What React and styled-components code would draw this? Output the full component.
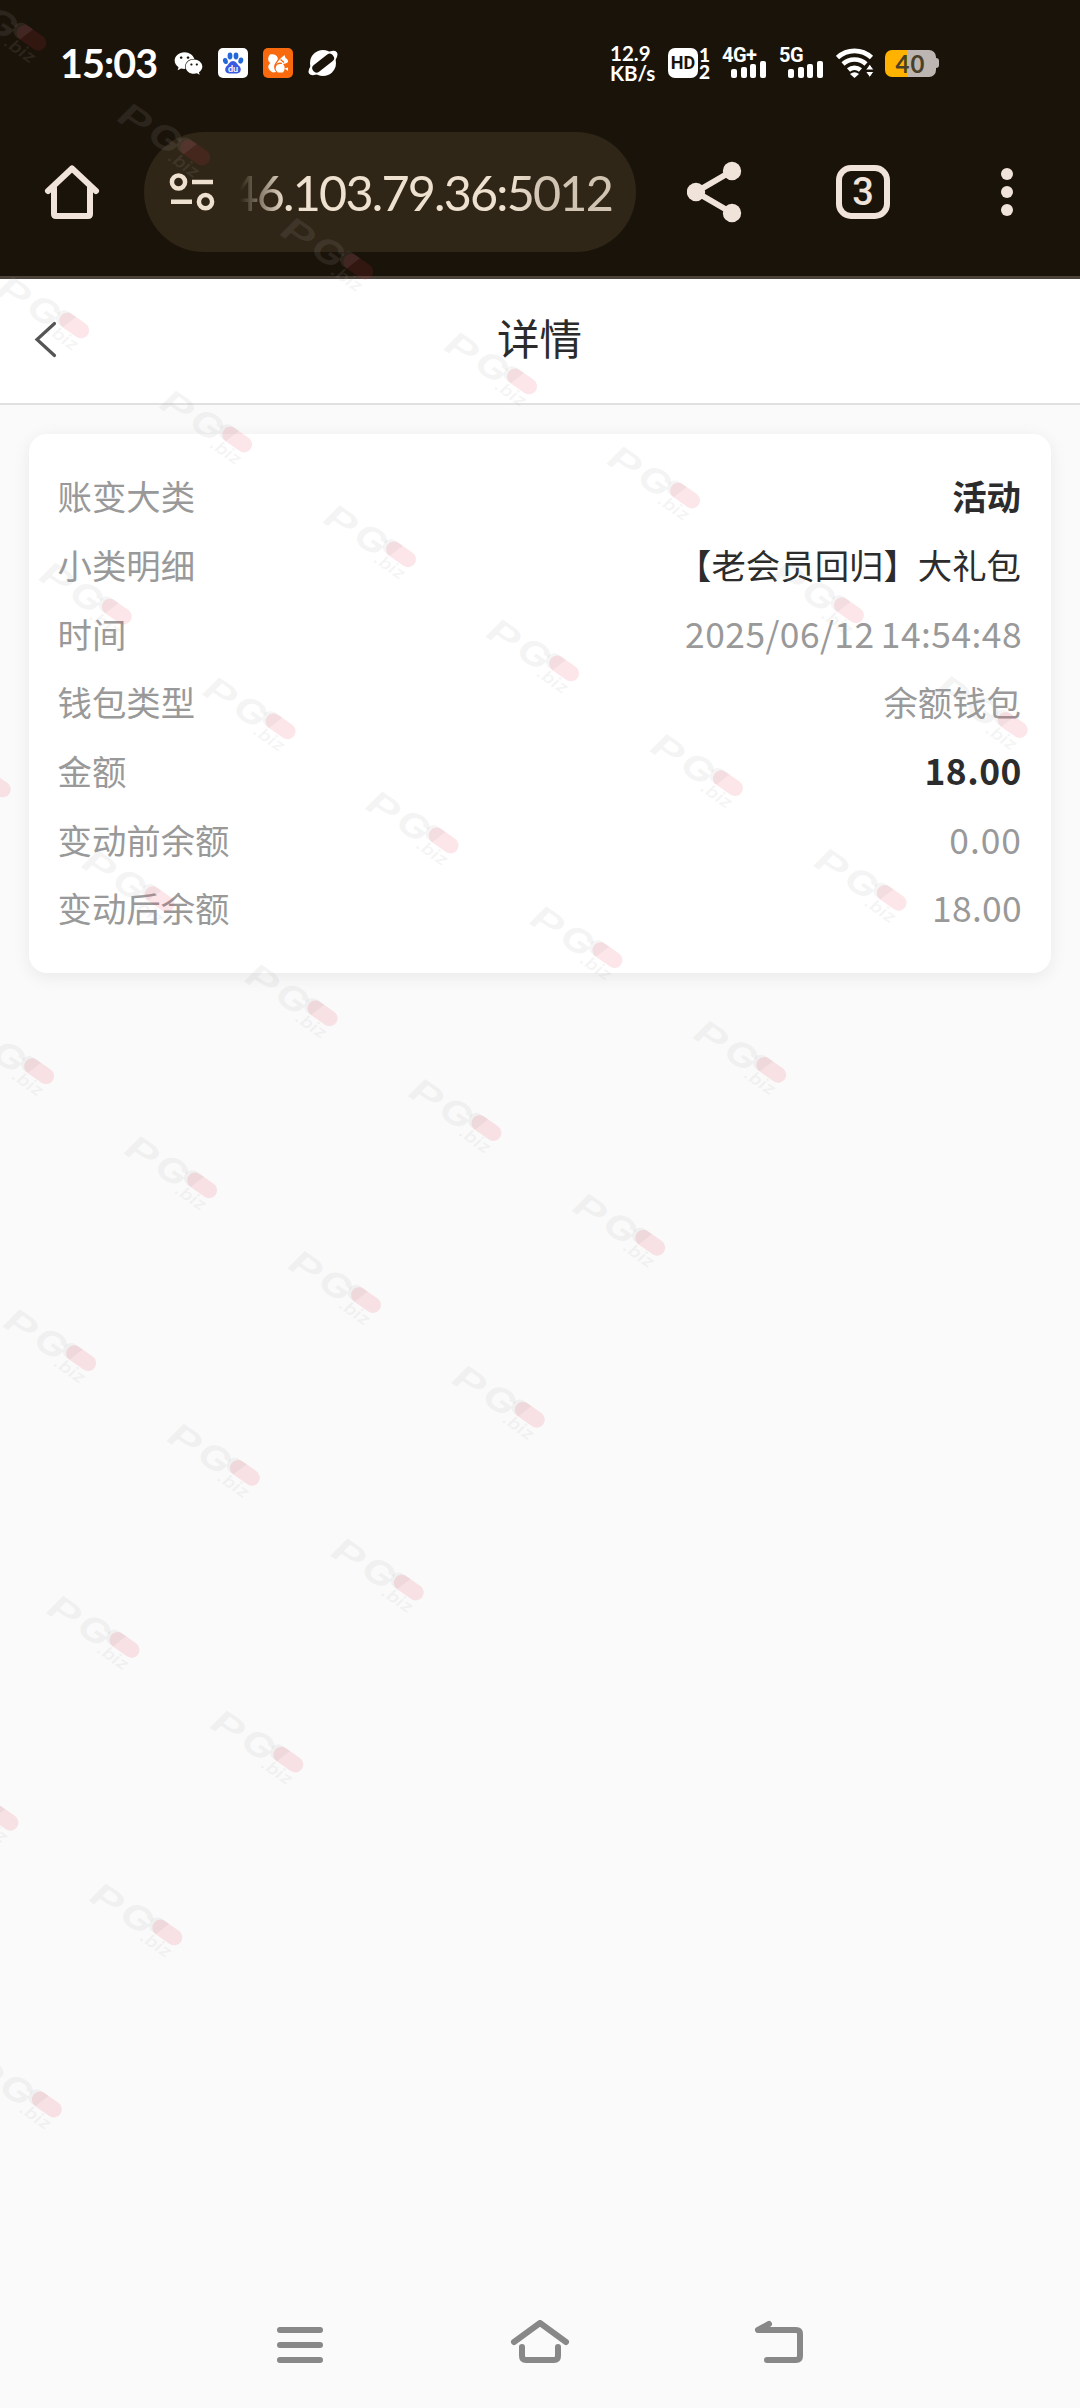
import React from "react";
import styled, { createGlobalStyle } from "styled-components";
import { FaWeixin } from "react-icons/fa";

const GlobalStyle = createGlobalStyle`
    * {
        box-sizing: border-box;
    }
    body {
        margin: 0;
        background: #fafafa;
        font-family: "Noto Sans CJK SC", "Noto Sans", sans-serif;
    }
    svg {
        display: block;
        flex: none;
    }
`;

const Screen = styled.div`
    position: relative;
    display: flex;
    flex-direction: column;
    width: 1080px;
    height: 2408px;
    overflow: hidden;
    background: #fafafa;
`;

const Chrome = styled.div`
    height: 279px;
    background: #1a1309;
    border-bottom: 3px solid #4c433b;
`;

const StatusBar = styled.div`
    display: flex;
    align-items: center;
    height: 110px;
    padding: 16px 141px 0 60px;
    color: #fff;
    font-family: Lato, sans-serif;
`;

const Clock = styled.div`
    width: 114px;
    font-size: 39.5px;
    font-weight: 700;
    line-height: 40px;
    letter-spacing: -0.9px;
`;

const AppIcons = styled.div`
    display: flex;
    align-items: center;
    gap: 15px;
    flex: 1;
`;

const Speed = styled.div`
    width: 58px;
    font-size: 20.5px;
    font-weight: 700;
    line-height: 20px;
    white-space: nowrap;
`;

const HdBadge = styled.div`
    display: flex;
    align-items: center;
    justify-content: center;
    width: 30px;
    height: 30px;
    border-radius: 7px;
    background: #fff;
    color: #1a1309;
    font: 700 18px/30px Roboto, sans-serif;
`;

const SimNumbers = styled.div`
    display: flex;
    flex-direction: column;
    width: 24px;
    padding-left: 1px;
    font: 900 19px/17px Lato, sans-serif;
`;

const Signal = styled.div`
    display: flex;
    flex-direction: column;
    width: ${props => props.$width}px;
    height: 30px;
`;

const SignalLabel = styled.span`
    height: 12px;
    font: 700 20px/14px Roboto, sans-serif;
    letter-spacing: -0.5px;
`;

const SignalBars = styled.div`
    display: flex;
    align-items: flex-end;
    gap: 3.5px;
    height: 18px;
    padding-left: 9px;
`;

const Bar = styled.i`
    width: 6px;
    height: ${props => props.$size}px;
    border-radius: 2px;
    background: #fff;
`;

const Battery = styled.div`
    display: flex;
    align-items: center;
    margin-left: 11px;
`;

const BatteryBody = styled.div`
    width: 51px;
    height: 27px;
    border-radius: 7px;
    background: linear-gradient(90deg, #ffb300 43%, #bcb5b1 43%);
    color: #4a4028;
    font: 700 24px/28px Lato, sans-serif;
    letter-spacing: 1px;
    text-align: center;
`;

const BatteryTip = styled.div`
    width: 3px;
    height: 10px;
    border-radius: 0 3px 3px 0;
    background: #bcb5b1;
`;

const Toolbar = styled.div`
    display: flex;
    align-items: center;
    height: 164px;
    padding-left: 42px;
    color: #f0e3da;
`;

const AddressPill = styled.div`
    display: flex;
    align-items: center;
    width: 492px;
    height: 120px;
    margin: 0 51px 0 42px;
    padding-left: 24px;
    border-radius: 60px;
    background: #302617;
    color: #efe1cf;
`;

const Address = styled.div`
    display: flex;
    justify-content: flex-end;
    width: 372px;
    margin-left: 24px;
    overflow: hidden;
    font: 400 48.5px/64px Lato, sans-serif;
    letter-spacing: -1.8px;
    white-space: nowrap;
    mask-image: linear-gradient(90deg, transparent, #000 45px, #000 270px, rgba(0, 0, 0, 0.85) 300px);
`;

const TabCount = styled.div`
    width: 54px;
    height: 54px;
    margin: 0 87px 0 91px;
    border: 6px solid #f0e3da;
    border-radius: 15px;
    font: 500 38px/43px Roboto, sans-serif;
    text-align: center;
`;

const Header = styled.header`
    display: grid;
    grid-template-columns: 60px 1fr 60px;
    align-items: center;
    height: 126px;
    padding: 0 32px;
    background: #fff;
    border-bottom: 2px solid #e0e0e0;
`;

const Title = styled.h1`
    margin: 0;
    padding: 0 1px 8px 0;
    color: #2b2b2b;
    font-size: 42.5px;
    font-weight: 400;
    line-height: 60px;
    text-align: center;
`;

const Card = styled.section`
    height: 539px;
    margin: 29px 29px 0;
    padding: 27px 30px 27px 28.5px;
    border-radius: 18px;
    background: #fff;
    box-shadow: 0 4px 18px rgba(0, 0, 0, 0.07);
`;

const Row = styled.div`
    display: flex;
    justify-content: space-between;
    align-items: center;
    height: 68.7px;
    font-size: 34.4px;
    line-height: 50px;
`;

const Label = styled.span`
    color: #999;
`;

const Value = styled.span`
    color: ${props => (props.$dark ? "#2c2c2c" : "#999")};
    font-weight: ${props => (props.$bold ? 700 : 400)};
`;

const Digits = styled(Value)`
    margin-right: -1px;
    font-size: 35.4px;
    letter-spacing: ${props => props.$spacing}px;
    word-spacing: -2px;
`;

const NavBar = styled.nav`
    display: flex;
    justify-content: space-between;
    align-items: center;
    height: 126px;
    margin-top: auto;
    padding: 0 275px 0 274px;
    color: #888;
`;

// sits over everything, tilted sheet of 7 x 9 marks
const WatermarkSheet = styled.div`
    position: absolute;
    left: -31px;
    top: -29px;
    display: grid;
    grid-template-columns: repeat(7, 199.6px);
    grid-auto-rows: 210.5px;
    transform: rotate(35deg);
    transform-origin: 0 0;
    pointer-events: none;
`;

const rows = [
    { label: "账变大类", value: "活动", dark: true, bold: true },
    { label: "小类明细", value: "【老会员回归】大礼包", dark: true },
    { label: "时间", value: "2025/06/12 14:54:48", spacing: 0.45 },
    { label: "钱包类型", value: "余额钱包" },
    { label: "金额", value: "18.00", dark: true, bold: true, spacing: 0.5 },
    { label: "变动前余额", value: "0.00", spacing: 1 },
    { label: "变动后余额", value: "18.00", spacing: 0.3 },
];

const Watermark = () => (
    <svg width="120" height="60" viewBox="0 0 120 60" fontFamily="Inter, sans-serif">
        <g fill="#aaa" fillOpacity="0.12">
            <text transform="translate(3 38) skewX(-10)" fontSize="33" fontWeight="600" textLength="33" lengthAdjust="spacingAndGlyphs">P</text>
            <text transform="translate(39 36) skewX(-8)" fontSize="34" fontWeight="700" textLength="32" lengthAdjust="spacingAndGlyphs">G</text>
            <text x="70" y="41" fontSize="17" fontWeight="600" fontStyle="italic" textLength="34" lengthAdjust="spacingAndGlyphs">.biz</text>
            <path d="M77 11h9l-5 16h-4a8 8 0 0 1 0-16z" />
        </g>
        <rect x="73" y="11" width="33" height="16" rx="8" fill="#e6304c" fillOpacity="0.12" />
    </svg>
);

const BaiduIcon = () => (
    <svg width="30" height="30" viewBox="0 0 30 30">
        <rect width="30" height="30" rx="5" fill="#fff" />
        <g fill="#2468d8">
            <ellipse cx="7.4" cy="13" rx="2.4" ry="3.1" transform="rotate(-15 7.4 13)" />
            <ellipse cx="12" cy="8" rx="2.4" ry="3.4" />
            <ellipse cx="18" cy="8" rx="2.4" ry="3.4" />
            <ellipse cx="22.8" cy="12.6" rx="2.4" ry="3.1" transform="rotate(15 22.8 12.6)" />
            <path fill="#3a5be0" d="M15 13c3 0 4 3.200 6 4.800 2.600 2.200 2.600 7.400-2 7.600H11c-4.600-.2-4.600-5.400-2-7.600C11 16.200 12 13 15 13z" />
        </g>
        <text x="15" y="24" fill="#fff" fontFamily="Lato, sans-serif" fontSize="9" fontWeight="700" textAnchor="middle">du</text>
    </svg>
);

const SquirrelIcon = () => (
    <svg width="30" height="30" viewBox="0 0 30 30">
        <rect width="30" height="30" rx="5" fill="#f9690e" />
        <g fill="#fff">
            <path d="M10 24.500C4.500 22 4 17.500 7.500 15 4.500 13.500 4.500 9 7 6.500c3.500-1 7 .3 7.800 3.500.4 2.800-3.200 4.500-3.600 8-.2 2.500.6 4.500 2 6z" />
            <path d="M12.500 19c.2-3.200 3-6.500 5.500-9L21.500 7l1 3c2 1 2.800 2.600 2.500 4-1.500 1.600-3.600 1.800-5 2 2 2 2.500 5.500 0 8.500h-5c-1.500-1.200-2.600-3-2.500-5.500z" />
        </g>
        <path d="M12 20c.2-3.500 3.500-5.500 7-4.500M17.500 11.500l3.500 3" fill="none" stroke="#f9690e" strokeWidth="1.300" />
        <path d="M21.500 20.500l3.500-1v3.500z" fill="#fff" />
    </svg>
);

const PlanetIcon = () => (
    <svg width="30" height="30" viewBox="0 0 30 30">
        <circle cx="15" cy="15" r="13" fill="#fff" />
        <ellipse cx="15" cy="15" rx="17.500" ry="7" fill="#fff" transform="rotate(-38 15 15)" />
        <rect x="2.500" y="11" width="25" height="8.500" rx="4" fill="#1a1309" transform="rotate(-38 15 15)" />
    </svg>
);

const WifiIcon = () => (
    <svg width="38" height="30" viewBox="0 0 38 30">
        <g fill="none" stroke="#fff" strokeWidth="4.600">
            <path d="M1.500 9.500a25 25 0 0 1 34 0" />
            <path d="M7 16a17 17 0 0 1 23 0" />
            <path d="M12.500 22a9 9 0 0 1 12 0" />
        </g>
        <path d="M14 26q4.500-3.500 9 0l-4.500 4z" fill="#fff" />
        <path d="M29.500 22l4.250-6 4.250 6zM29.500 23.500H38L33.750 29.500z" fill="#fff" stroke="#1a1309" />
    </svg>
);

const HomeIcon = () => (
    <svg width="60" height="60" viewBox="0 0 60 60" fill="none" stroke="currentColor" strokeWidth="6" strokeLinecap="round" strokeLinejoin="round">
        <path d="M6 29L30 6.500 54 29" />
        <path d="M12 26v26q0 2 2 2h32q2 0 2-2V26" />
    </svg>
);

const TuneIcon = () => (
    <svg width="48" height="48" viewBox="0 0 48 48" fill="none" stroke="currentColor" strokeWidth="4.500">
        <circle cx="10.500" cy="14" r="6.600" />
        <path d="M24 14h21M3 33.700h21" />
        <circle cx="37.500" cy="33.700" r="6.600" />
    </svg>
);

const ShareIcon = () => (
    <svg width="58" height="64" viewBox="0 0 58 64" fill="currentColor">
        <path d="M45 11L9 32l36 21" fill="none" stroke="currentColor" strokeWidth="6" />
        <circle cx="9" cy="32" r="9.200" />
        <circle cx="45" cy="11" r="9.200" />
        <circle cx="45" cy="53" r="9.200" />
    </svg>
);

const MoreIcon = () => (
    <svg width="60" height="60" viewBox="0 0 60 60" fill="currentColor">
        <circle cx="30" cy="12" r="6" />
        <circle cx="30" cy="30" r="6" />
        <circle cx="30" cy="48" r="6" />
    </svg>
);

const SignalMeter = ({ label, width }) => (
    <Signal $width={width}>
        <SignalLabel>{label}</SignalLabel>
        <SignalBars>
            <Bar $size={9} />
            <Bar $size={11} />
            <Bar $size={14} />
            <Bar $size={17} />
        </SignalBars>
    </Signal>
);

const App = function () {
    return (
        <Screen>
            <GlobalStyle />
            <Chrome>
                <StatusBar>
                    <Clock>15:03</Clock>
                    <AppIcons>
                        <FaWeixin size={29} />
                        <BaiduIcon />
                        <SquirrelIcon />
                        <PlanetIcon />
                    </AppIcons>
                    <Speed>12.9<br />KB/s</Speed>
                    <HdBadge>HD</HdBadge>
                    <SimNumbers><span>1</span><span>2</span></SimNumbers>
                    <SignalMeter label="4G+" width={57} />
                    <SignalMeter label="5G" width={57} />
                    <WifiIcon />
                    <Battery>
                        <BatteryBody>40</BatteryBody>
                        <BatteryTip />
                    </Battery>
                </StatusBar>
                <Toolbar>
                    <HomeIcon />
                    <AddressPill>
                        <TuneIcon />
                        <Address>46.103.79.36:5012</Address>
                    </AddressPill>
                    <ShareIcon />
                    <TabCount>3</TabCount>
                    <MoreIcon />
                </Toolbar>
            </Chrome>
            <Header>
                <svg width="28" height="40" viewBox="0 0 28 40" fill="none" stroke="#555" strokeWidth="3.200" strokeLinecap="round">
                    <path d="M22.500 2.500L5 18.500 22.500 34.500" />
                </svg>
                <Title>详情</Title>
            </Header>
            <Card>
                {rows.map(row => {
                    const Text = row.spacing ? Digits : Value;
                    return (
                        <Row key={row.label}>
                            <Label>{row.label}</Label>
                            <Text $dark={row.dark} $bold={row.bold} $spacing={row.spacing}>{row.value}</Text>
                        </Row>
                    );
                })}
            </Card>
            <NavBar>
                <svg width="52" height="50" viewBox="0 0 52 50" stroke="currentColor" strokeWidth="6" strokeLinecap="round">
                    <path d="M6 10h40M6 25h40M6 40h40" />
                </svg>
                <svg width="60" height="50" viewBox="0 0 60 50" fill="none" stroke="currentColor" strokeWidth="6" strokeLinecap="round" strokeLinejoin="round">
                    <path d="M4 22L30 3l26 19" />
                    <path d="M12 27v9q0 4 4 4h28q4 0 4-4v-9" />
                </svg>
                <svg width="52" height="50" viewBox="0 0 52 50" fill="none" stroke="currentColor" strokeWidth="6" strokeLinecap="round" strokeLinejoin="round">
                    <path d="M16 4L5 10h38q4 0 4 4v22q0 4-4 4H14" />
                </svg>
            </NavBar>
            <WatermarkSheet>
                {Array.from({ length: 63 }, (_, i) => <Watermark key={i} />)}
            </WatermarkSheet>
        </Screen>
    );
};

export default App;
